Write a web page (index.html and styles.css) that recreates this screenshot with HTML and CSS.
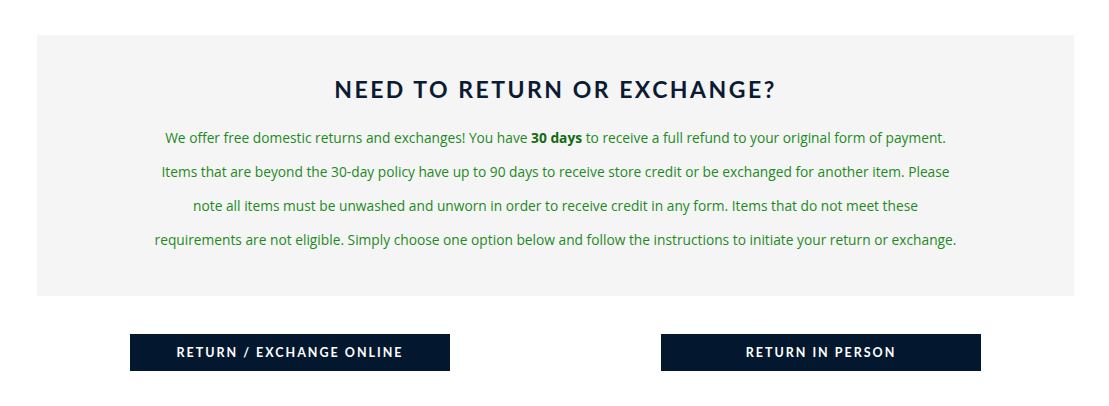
FILE: index.html
```html
<!DOCTYPE html>
<html>
<head>
<meta charset="utf-8">
<link rel="stylesheet" href="styles.css">
</head>
<body>
<div class="page">
  <section class="panel">
    <h2 class="title">NEED TO RETURN OR EXCHANGE?</h2>
    <p class="copy">We offer free domestic returns and exchanges! You have <strong>30 days</strong> to receive a full refund to your original form of payment. Items that are beyond the 30-day policy have up to 90 days to receive store credit or be exchanged for another item. Please note all items must be unwashed and unworn in order to receive credit in any form. Items that do not meet these requirements are not eligible. Simply choose one option below and follow the instructions to initiate your return or exchange.</p>
  </section>
  <div class="actions">
    <a class="btn" href="#">RETURN / EXCHANGE ONLINE</a>
    <a class="btn" href="#">RETURN IN PERSON</a>
  </div>
</div>
</body>
</html>
```
FILE: styles.css
```css
html, body {
  margin: 0;
  padding: 0;
  background: #ffffff;
}
.page {
  padding: 35px 35px 0 37px;
  font-family: Lato, "Open Sans", sans-serif;
}
.panel {
  background: #f5f5f5;
  height: 261px;
  box-sizing: border-box;
  padding-top: 40px;
  text-align: center;
}
.title {
  margin: 0;
  font-size: 23px;
  font-weight: 700;
  letter-spacing: 2.5px;
  color: #0b1b33;
  line-height: 28px;
}
.copy {
  margin: 18px auto 0;
  max-width: 808px;
  font-family: "Open Sans", Lato, sans-serif;
  font-size: 13.75px;
  line-height: 34px;
  color: #1d8a1d;
}
.copy strong {
  font-weight: 700;
  color: #116a11;
}
.actions {
  display: flex;
  justify-content: space-between;
  padding: 38px 93px 0;
}
.btn {
  display: flex;
  align-items: center;
  justify-content: center;
  width: 320px;
  height: 37px;
  background: #03182f;
  color: #ffffff;
  text-decoration: none;
  font-size: 12.5px;
  font-weight: 700;
  letter-spacing: 2px;
}
```
